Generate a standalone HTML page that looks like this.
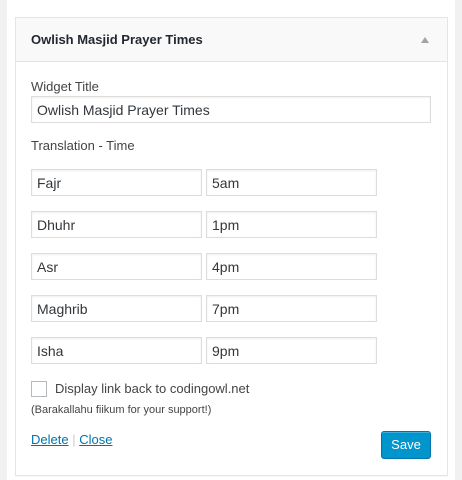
<!DOCTYPE html>
<html><head><style>
body{margin:0;width:462px;height:480px;background:#f1f1f1;font-family:"Liberation Sans",sans-serif;position:relative;overflow:hidden}
.outer{position:absolute;left:7px;top:0;width:448px;height:480px;background:#fff}
.w{position:absolute;left:15px;top:17px;width:431px;height:457px;border:1px solid #e5e5e5;background:#fff;box-shadow:0 1px 1px rgba(0,0,0,.04)}
.hd{position:absolute;left:0;top:0;width:431px;height:43px;background:#f9f9f9;border-bottom:1px solid #e5e5e5}
.hd span{position:absolute;left:15px;top:14px;font-size:13px;font-weight:bold;color:#23282d}
.tri{position:absolute;left:405px;top:19px;width:0;height:0;border-left:4px solid transparent;border-right:4px solid transparent;border-bottom:6px solid #a0a5aa}
.t{position:absolute;font-size:13px;color:#444}
.in{position:absolute;box-sizing:border-box;border:1px solid #ddd;box-shadow:inset 0 1px 2px rgba(0,0,0,.07);background:#fff;font-size:14px;color:#32373c;padding:5px 0 0 5px;height:27px}
a{color:#0073aa}
</style></head><body>
<div class="outer"></div>
<div class="w">
<div class="hd"><span>Owlish Masjid Prayer Times</span><div class="tri"></div></div>
</div>
<div class="t" style="left:31px;top:79px">Widget Title</div>
<div class="in" style="left:31px;top:96px;width:400px">Owlish Masjid Prayer Times</div>
<div class="t" style="left:31px;top:138px">Translation - Time</div>
<div class="in" style="left:31px;top:169px;width:171px">Fajr</div><div class="in" style="left:206px;top:169px;width:171px">5am</div>
<div class="in" style="left:31px;top:211px;width:171px">Dhuhr</div><div class="in" style="left:206px;top:211px;width:171px">1pm</div>
<div class="in" style="left:31px;top:253px;width:171px">Asr</div><div class="in" style="left:206px;top:253px;width:171px">4pm</div>
<div class="in" style="left:31px;top:295px;width:171px">Maghrib</div><div class="in" style="left:206px;top:295px;width:171px">7pm</div>
<div class="in" style="left:31px;top:337px;width:171px">Isha</div><div class="in" style="left:206px;top:337px;width:171px">9pm</div>
<div style="position:absolute;left:31px;top:381px;width:16px;height:16px;box-sizing:border-box;border:1px solid #b4b9be;background:#fff"></div>
<div class="t" style="left:55px;top:381px">Display link back to codingowl.net</div>
<div class="t" style="left:31px;top:404px;font-size:11px">(Barakallahu fiikum for your support!)</div>
<div class="t" style="left:31px;top:432px"><a href="#" style="color:#0073aa">Delete</a> <span style="color:#ccc">|</span> <a href="#" style="color:#0073aa">Close</a></div>
<div style="position:absolute;left:381px;top:431px;width:50px;height:28px;box-sizing:border-box;background:#0095cc;border:1px solid #0073aa;border-radius:3px;color:#fff;font-size:13px;text-align:center;line-height:26px;box-shadow:inset 0 1px 0 rgba(120,200,230,.5)">Save</div>
</body></html>
